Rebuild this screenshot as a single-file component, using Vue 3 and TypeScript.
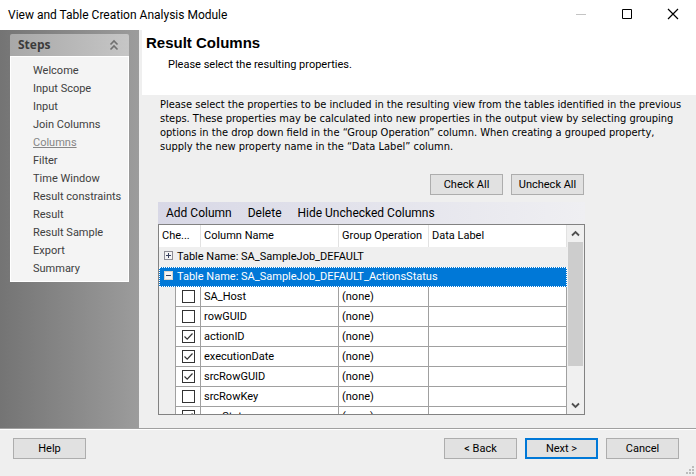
<script setup lang="ts">
import { ref } from 'vue'

interface Column {
  name: string
  checked: boolean
  operation: string
  label: string
}

const steps: string[] = [
  'Welcome',
  'Input Scope',
  'Input',
  'Join Columns',
  'Columns',
  'Filter',
  'Time Window',
  'Result constraints',
  'Result',
  'Result Sample',
  'Export',
  'Summary',
]
const currentStep = ref('Columns')

const make = (name: string, checked: boolean): Column => ({
  name,
  checked,
  operation: '(none)',
  label: '',
})

const columns = ref<Column[]>([
  make('SA_Host', false),
  make('rowGUID', false),
  make('actionID', true),
  make('executionDate', true),
  make('srcRowGUID', true),
  make('srcRowKey', false),
  make('rowStatus', true),
])

function setAll(value: boolean): void {
  columns.value.forEach((c) => (c.checked = value))
}
</script>

<template>
  <div class="window">
    <header class="titlebar">
      <h1>View and Table Creation Analysis Module</h1>
      <div class="controls">
        <button type="button" aria-label="Minimize" disabled>
          <svg width="12" height="12" viewBox="0 0 12 12"><path d="M1 6.500H11" stroke="#c4c4c4" /></svg>
        </button>
        <button type="button" aria-label="Maximize">
          <svg width="12" height="12" viewBox="0 0 12 12"><path d="M1.500 1.500H10.500V10.500H1.500Z" fill="none" stroke="#000" /></svg>
        </button>
        <button type="button" aria-label="Close">
          <svg width="12" height="12" viewBox="0 0 12 12"><path d="M1 1L11 11M11 1L1 11" fill="none" stroke="#000" stroke-width="1.200" /></svg>
        </button>
      </div>
    </header>

    <div class="body">
      <aside class="sidebar">
        <nav class="panel" aria-label="Steps">
          <div class="panel-head">
            <h2>Steps</h2>
            <svg width="10" height="12" viewBox="0 0 10 12">
              <path d="M1.500 5.500L5 2L8.500 5.500M1.500 10.500L5 7L8.500 10.500" fill="none" stroke="#707070" stroke-width="1.600" />
            </svg>
          </div>
          <ul>
            <li v-for="step in steps" :key="step">
              <a href="#" :class="{ current: step === currentStep }">{{ step }}</a>
            </li>
          </ul>
        </nav>
      </aside>

      <main class="main">
        <div class="heading">
          <h2>Result Columns</h2>
          <p>Please select the resulting properties.</p>
        </div>

        <div class="content">
          <p class="intro">
            Please select the properties to be included in the resulting view from the tables identified in the previous
            steps. These properties may be calculated into new properties in the output view by selecting grouping
            options in the drop down field in the “Group Operation” column. When creating a grouped property,
            supply the new property name in the “Data Label” column.
          </p>

          <div class="grid-area">
            <div class="bulk">
              <button type="button" class="btn" @click="setAll(true)">Check All</button>
              <button type="button" class="btn" @click="setAll(false)">Uncheck All</button>
            </div>

            <div class="toolbar">
              <button type="button">Add Column</button>
              <button type="button">Delete</button>
              <button type="button">Hide Unchecked Columns</button>
            </div>

            <div class="grid">
              <div class="viewport">
                <table>
                  <colgroup>
                    <col class="c-indent" />
                    <col class="c-check" />
                    <col class="c-name" />
                    <col class="c-op" />
                    <col class="c-label" />
                  </colgroup>
                  <thead>
                    <tr>
                      <th colspan="2">Che...</th>
                      <th>Column Name</th>
                      <th>Group Operation</th>
                      <th>Data Label</th>
                    </tr>
                  </thead>
                  <tbody>
                    <tr class="group">
                      <td colspan="5">
                        <button type="button" aria-label="Expand">
                          <svg width="9" height="9" viewBox="0 0 9 9">
                            <rect x=".5" y=".5" width="8" height="8" fill="#f4f4f4" stroke="#8c8c94" />
                            <path d="M2 4.500H7M4.500 2V7" stroke="#39415e" />
                          </svg>
                        </button>
                        <span>Table Name: SA_SampleJob_DEFAULT</span>
                      </td>
                    </tr>
                    <tr class="group selected">
                      <td colspan="5">
                        <button type="button" aria-label="Collapse">
                          <svg width="9" height="9" viewBox="0 0 9 9">
                            <rect x=".5" y=".5" width="8" height="8" fill="#f4f4f4" stroke="#d8d4cc" />
                            <path d="M2 4.500H7" stroke="#39415e" />
                          </svg>
                        </button>
                        <span>Table Name: SA_SampleJob_DEFAULT_ActionsStatus</span>
                      </td>
                    </tr>
                    <tr v-for="column in columns" :key="column.name" class="row">
                      <td class="indent"></td>
                      <td class="check">
                        <input v-model="column.checked" type="checkbox" :aria-label="column.name" />
                      </td>
                      <td>{{ column.name }}</td>
                      <td>{{ column.operation }}</td>
                      <td>{{ column.label }}</td>
                    </tr>
                  </tbody>
                </table>
              </div>
              <div class="scrollbar">
                <button type="button" aria-label="Scroll up">
                  <svg width="9" height="7" viewBox="0 0 9 7"><path d="M1 5.500L4.500 2L8 5.500" fill="none" stroke="#505050" stroke-width="1.800" /></svg>
                </button>
                <div class="track"><div class="thumb"></div></div>
                <button type="button" aria-label="Scroll down">
                  <svg width="9" height="7" viewBox="0 0 9 7"><path d="M1 1.500L4.500 5L8 1.500" fill="none" stroke="#505050" stroke-width="1.800" /></svg>
                </button>
              </div>
            </div>
          </div>
        </div>
      </main>
    </div>

    <footer class="footer">
      <button type="button" class="btn">Help</button>
      <div class="nav">
        <button type="button" class="btn">&lt; Back</button>
        <button type="button" class="btn primary">Next &gt;</button>
        <button type="button" class="btn">Cancel</button>
      </div>
      <svg class="grip" width="8" height="8" viewBox="0 0 8 8" fill="#bcbcbc">
        <path d="M6 0h2v2h-2zM3 3h2v2h-2zM6 3h2v2h-2zM0 6h2v2h-2zM3 6h2v2h-2zM6 6h2v2h-2z" />
      </svg>
    </footer>
  </div>
</template>

<style>
body {
  margin: 0;
}
</style>

<style scoped>
.window {
  display: flex;
  flex-direction: column;
  height: 100vh;
  background: #efefef;
  color: #000;
  font: 11px/18px Roboto, "DejaVu Sans", sans-serif;
}

* {
  box-sizing: border-box;
}

h1,
h2,
p,
ul {
  margin: 0;
  padding: 0;
}

button {
  padding: 0;
  border: 0;
  background: none;
  color: inherit;
  font: inherit;
}

svg {
  display: block;
}

.titlebar {
  display: flex;
  flex: none;
  justify-content: space-between;
  height: 30px;
  padding-left: 8px;
  background: #fff;
}

.titlebar h1 {
  font: 12px/30px Roboto, sans-serif;
}

.controls {
  display: flex;
}

.controls button {
  display: grid;
  place-items: center;
  width: 46px;
  height: 28px;
}

.body {
  display: flex;
  flex: 1;
  min-height: 0;
}

.sidebar {
  flex: none;
  width: 139px;
  padding: 4px 10px;
  background: linear-gradient(90deg, #747474, #9c9c9c);
}

.panel-head {
  display: flex;
  align-items: center;
  justify-content: space-between;
  height: 22px;
  padding: 0 10px 0 8px;
  border-radius: 2px 2px 0 0;
  background: linear-gradient(90deg, #a8a8a8, #c6c6c6);
}

.panel-head h2 {
  color: #3c3c3c;
  font: bold 12px/20px "Open Sans", sans-serif;
}

.panel ul {
  padding: 5px 0 3px 22px;
  border: 1px solid #fff;
  background: #f4f4f4;
  list-style: none;
}

.panel a {
  color: #404040;
  text-decoration: none;
  white-space: nowrap;
}

.panel a.current {
  color: #868686;
  text-decoration: underline;
}

.main {
  display: flex;
  flex: 1;
  flex-direction: column;
  min-width: 0;
  padding-left: 3px;
}

.heading {
  flex: none;
  height: 65px;
  padding: 4px 4px 0;
  background: #fff;
}

.heading h2 {
  font: bold 15px/18px "Liberation Sans", Arial, sans-serif;
}

.heading p {
  padding: 4px 22px 0;
}

.content {
  display: flex;
  flex: 1;
  flex-direction: column;
  min-height: 0;
  padding: 3px 8px 13px 16px;
}

.intro {
  padding-left: 2px;
  font: 11px/14px "DejaVu Sans Condensed", "DejaVu Sans", sans-serif;
}

.grid-area {
  display: flex;
  flex: 1;
  flex-direction: column;
  min-height: 0;
  margin-right: 103px;
}

.bulk {
  display: flex;
  gap: 8px;
  justify-content: flex-end;
  padding: 20px 1px 7px 0;
}

.btn {
  width: 73px;
  height: 21px;
  border: 1px solid #adadad;
  background: #e1e1e1;
  line-height: 18px;
}

.btn.primary {
  border: 2px solid #0078d7;
}

.toolbar {
  display: flex;
  flex: none;
  gap: 16px;
  height: 22px;
  padding-left: 8px;
  background: linear-gradient(90deg, #d8d8e6, #efeff2);
  font: 12px/22px Roboto, sans-serif;
}

.grid {
  display: flex;
  flex: 1;
  min-height: 0;
  border: 1px solid #828282;
  background: #efefef;
}

.viewport {
  flex: 1;
  overflow: hidden;
}

table {
  width: 100%;
  border-collapse: separate;
  border-spacing: 0;
  table-layout: fixed;
}

.c-indent {
  width: 17px;
}

.c-check {
  width: 25px;
}

.c-name {
  width: 138px;
}

.c-op {
  width: 90px;
}

th,
td {
  height: 20px;
  padding: 0 3px;
  border-right: 1px solid #a0a0a0;
  border-bottom: 1px solid #a0a0a0;
  background: #fff;
  line-height: 18px;
  text-align: left;
  white-space: nowrap;
}

th {
  height: 22px;
  border-right-color: #e2e2e2;
  border-bottom: 0;
  font-weight: normal;
}

.group td {
  padding: 0 5px;
  border: 0;
  background: #efefef;
}

.group button {
  display: inline-block;
  margin-right: 4px;
}

.group.selected td {
  padding: 0 4px;
  border: 1px dotted #fff;
  background: #0078d7;
  color: #fff;
}

.row .indent {
  border-bottom: 0;
  background: #efefef;
}

.row .check {
  padding: 0 6px;
}

.check input {
  display: block;
  width: 13px;
  height: 13px;
  margin: 0;
  appearance: none;
  border: 1px solid #333;
  background: #fff;
}

.check input:checked {
  background: #fff url("data:image/svg+xml,%3Csvg xmlns='http://www.w3.org/2000/svg' viewBox='0 0 11 11'%3E%3Cpath d='M1.500 5.500L4.200 8.200L9.500 2.500' fill='none' stroke='%23333' stroke-width='1.200'/%3E%3C/svg%3E");
}

.scrollbar {
  display: flex;
  flex: none;
  flex-direction: column;
  width: 17px;
  padding: 0 1px;
  background: #f0f0f0;
}

.scrollbar button {
  display: grid;
  flex: none;
  place-items: center;
  height: 17px;
}

.track {
  flex: 1;
}

.thumb {
  height: 80%;
  background: #cdcdcd;
}

.footer {
  position: relative;
  display: flex;
  flex: none;
  justify-content: space-between;
  padding: 9px 17px 17px 13px;
  border-top: 1px solid #a0a0a0;
  box-shadow: inset 0 1px #fff;
}

.nav {
  display: flex;
  gap: 8px;
}

.grip {
  position: absolute;
  right: 2px;
  bottom: 2px;
}
</style>
